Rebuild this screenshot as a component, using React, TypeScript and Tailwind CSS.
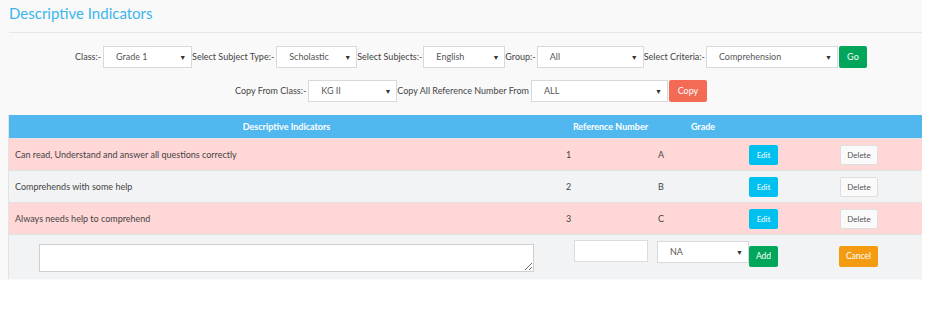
import React from "react";

const FakeSelect = ({ value, w }: { value: string; w: string }) => (
  <div
    className={`${w} h-[22px] bg-white border border-[#d9d9d9] flex items-center justify-between pl-[12px] pr-[5px] text-[#555] text-[9px]`}
  >
    <span>{value}</span>
    <span className="text-[7px] text-[#333]">▼</span>
  </div>
);

const Label = ({ children }: { children: React.ReactNode }) => (
  <span className="text-[9px] text-[#444] whitespace-nowrap">{children}</span>
);

const rows = [
  { text: "Can read, Understand and answer all questions correctly", ref: "1", grade: "A", bg: "bg-[#ffd7d7]" },
  { text: "Comprehends with some help", ref: "2", grade: "B", bg: "bg-[#f2f3f5]" },
  { text: "Always needs help to comprehend", ref: "3", grade: "C", bg: "bg-[#ffd7d7]" },
];

const cols = "grid grid-cols-[555px_93px_92px_48px_126px]";

export default function App() {
  return (
    <div className="w-[929px] h-[328px] bg-white font-['Lato',sans-serif]">
      <div className="w-[922px] h-[280px] bg-[#f9f9f9]">
        <h1 className="pl-[9px] pt-[2px] h-[32px] text-[15px] text-[#3db5ec]">Descriptive Indicators</h1>
        <div className="ml-[9px] border-t border-[#e6e6e6]" />

        <div className="flex items-center justify-center pl-[20px] mt-[13px] h-[22px]">
          <Label>Class:-</Label>
          <div className="ml-[2px]"><FakeSelect value="Grade 1" w="w-[89px]" /></div>
          <Label>Select Subject Type:-</Label>
          <div className="ml-[2px]"><FakeSelect value="Scholastic" w="w-[81px]" /></div>
          <Label>Select Subjects:-</Label>
          <div className="ml-[1px]"><FakeSelect value="English" w="w-[82px]" /></div>
          <Label>Group:-</Label>
          <div className="ml-[1px]"><FakeSelect value="All" w="w-[107px]" /></div>
          <Label>Select Criteria:-</Label>
          <div className="ml-[1px]"><FakeSelect value="Comprehension" w="w-[132px]" /></div>
          <button className="ml-[1px] w-[28px] h-[22px] bg-[#00a65a] text-white text-[9px] rounded-[2px]">Go</button>
        </div>

        <div className="flex items-center justify-center pl-[20px] mt-[12px] h-[22px]">
          <Label>Copy From Class:-</Label>
          <div className="ml-[2px]"><FakeSelect value="KG II" w="w-[89px]" /></div>
          <Label>Copy All Reference Number From</Label>
          <div className="ml-[2px]"><FakeSelect value="ALL" w="w-[137px]" /></div>
          <button className="ml-[1px] w-[38px] h-[22px] bg-[#f46b55] text-white text-[9px] rounded-[2px]">Copy</button>
        </div>

        <div className="ml-[8px] mt-[13px] border-l border-[#e3e3e3] text-[9px]">
          <div className={`${cols} h-[23px] items-center bg-[#51b8ef] text-white font-bold`}>
            <div className="text-center">Descriptive Indicators</div>
            <div className="text-center">Reference Number</div>
            <div className="text-center">Grade</div>
            <div />
            <div />
          </div>
          {rows.map((r) => (
            <div key={r.ref} className={`${cols} h-[32px] items-center ${r.bg} border-t border-[#e2e2e2] text-[#444]`}>
              <div className="pl-[6px]">{r.text}</div>
              <div className="pl-[2px]">{r.ref}</div>
              <div className="pl-[1px]">{r.grade}</div>
              <div>
                <button className="w-[29px] h-[20px] bg-[#00c0ef] text-white text-[8px] rounded-[2px]">Edit</button>
              </div>
              <div className="pl-[43px]">
                <button className="w-[38px] h-[20px] bg-[#fafafa] border border-[#dedede] text-[#555] text-[8px] rounded-[2px]">Delete</button>
              </div>
            </div>
          ))}
          <div className={`${cols} h-[45px] bg-[#f2f3f5] border-t border-[#e2e2e2]`}>
            <div className="px-[30px] pt-[9px]">
              <textarea className="w-full h-[28px] bg-white border border-[#cfcfcf] block resize-y" />
            </div>
            <div className="pl-[10px] pt-[5px]">
              <input className="w-[74px] h-[22px] bg-white border border-[#dcdcdc] block" />
            </div>
            <div className="pt-[6px]">
              <FakeSelect value="NA" w="w-[92px]" />
            </div>
            <div className="pt-[11px]">
              <button className="w-[29px] h-[21px] bg-[#00a65a] text-white text-[8.5px] rounded-[2px]">Add</button>
            </div>
            <div className="pl-[42px] pt-[11px]">
              <button className="w-[39px] h-[21px] bg-[#f39c12] text-white text-[8.5px] rounded-[2px]">Cancel</button>
            </div>
          </div>
        </div>
      </div>
    </div>
  );
}
